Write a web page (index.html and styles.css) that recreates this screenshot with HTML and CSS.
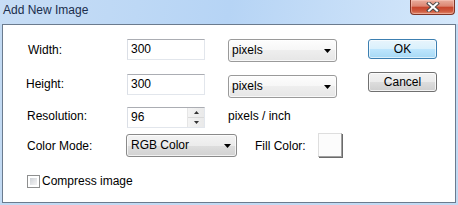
FILE: index.html
```html
<!DOCTYPE html>
<html>
<head>
<meta charset="utf-8">
<link rel="stylesheet" href="styles.css">
</head>
<body>
<div class="window">
  <div class="titlebar">
    <div class="title">Add New Image</div>
    <div class="close">
      <svg width="14" height="10" viewBox="0 0 14 10">
        <path d="M3 1.5 L11 8.5 M11 1.5 L3 8.5" stroke="#4b4b4b" stroke-width="4" stroke-linecap="square"/>
        <path d="M3 1.5 L11 8.5 M11 1.5 L3 8.5" stroke="#ffffff" stroke-width="2" stroke-linecap="square"/>
      </svg>
    </div>
  </div>
  <div class="client">
    <div class="form">
      <div class="row row1">
        <span class="label lbl-width">Width:</span>
        <div class="field"><span class="val">300</span></div>
        <div class="combo light gap">
          <span class="ctext">pixels</span>
          <svg class="arrow" width="7" height="4" viewBox="0 0 7 4"><path d="M0 0 H7 L3.5 4 Z" fill="#000"/></svg>
        </div>
      </div>
      <div class="row row2">
        <span class="label lbl-height">Height:</span>
        <div class="field"><span class="val">300</span></div>
        <div class="combo light gap down1">
          <span class="ctext">pixels</span>
          <svg class="arrow" width="7" height="4" viewBox="0 0 7 4"><path d="M0 0 H7 L3.5 4 Z" fill="#000"/></svg>
        </div>
      </div>
      <div class="row row3">
        <span class="label lbl-res">Resolution:</span>
        <div class="field spinfield">
          <span class="val">96</span>
          <div class="spin">
            <div class="spinbtn"><svg width="5" height="3" viewBox="0 0 5 3"><path d="M0 3 H5 L2.5 0 Z" fill="#333"/></svg></div>
            <div class="spinbtn"><svg width="5" height="3" viewBox="0 0 5 3"><path d="M0 0 H5 L2.5 3 Z" fill="#333"/></svg></div>
          </div>
        </div>
        <span class="unit">pixels / inch</span>
      </div>
      <div class="row row4">
        <span class="label lbl-mode">Color Mode:</span>
        <div class="combo mode">
          <span class="ctext">RGB Color</span>
          <svg class="arrow" width="7" height="4" viewBox="0 0 7 4"><path d="M0 0 H7 L3.5 4 Z" fill="#000"/></svg>
        </div>
        <span class="filllabel">Fill Color:</span>
        <div class="swatch"></div>
      </div>
      <div class="row row5">
        <span class="checkbox"><span class="checkinner"></span></span>
        <span class="checktext">Compress image</span>
      </div>
    </div>
    <div class="buttons">
      <div class="btn ok">OK</div>
      <div class="btn cancel">Cancel</div>
    </div>
  </div>
</div>
</body>
</html>
```

FILE: styles.css
```css
html, body {
  margin: 0;
  padding: 0;
}
body {
  font-family: "Liberation Sans", Arial, sans-serif;
  font-size: 12px;
  color: #000;
}
.window {
  width: 458px;
  height: 205px;
  background: #c2daf3;
  display: flex;
  flex-direction: column;
  overflow: hidden;
}
.titlebar {
  height: 24px;
  flex: none;
  display: flex;
  justify-content: space-between;
  align-items: flex-start;
  background: linear-gradient(100deg, #c7ddf5 0%, #bdd8f5 30%, #b6d4f5 50%, #c3dcf7 70%, #d5e8fb 100%);
}
.title {
  padding-left: 3px;
  line-height: 20px;
  color: #1a2d4c;
}
.close {
  width: 45px;
  height: 15px;
  margin-right: 3px;
  box-sizing: border-box;
  border: 1px solid #7f3426;
  border-top: none;
  border-radius: 0 0 4px 4px;
  background: linear-gradient(#e9ad9d 0%, #dc8571 45%, #c6442b 50%, #cf5a3f 80%, #e08a6e 100%);
  box-shadow: inset 0 0 0 1px rgba(255, 210, 200, 0.45);
  display: flex;
  align-items: center;
  justify-content: center;
}
.close svg {
  display: block;
}
.client {
  margin: 0 2px 2px 2px;
  height: 179px;
  box-sizing: border-box;
  border: 1px solid #6b7b8e;
  background: #fff;
  display: flex;
  padding: 14px 0 0 24px;
}
.form {
  width: 341px;
  flex: none;
  display: flex;
  flex-direction: column;
}
.row {
  display: flex;
  align-items: flex-start;
  flex: none;
}
.row1 { height: 23px; }
.row2 { height: 23px; margin-top: 12px; }
.row3 { height: 21px; margin-top: 10px; }
.row4 { height: 23px; margin-top: 6px; }
.row5 { height: 13px; margin-top: 18px; }
.label {
  width: 100px;
  flex: none;
  white-space: nowrap;
}
.lbl-width { line-height: 23px; padding-left: 1px; width: 99px; }
.lbl-height { line-height: 21px; padding-left: 0; margin-left: -1px; width: 101px; }
.lbl-res { line-height: 19px; }
.lbl-mode { line-height: 25px; width: 99px; }
.field {
  width: 78px;
  height: 21px;
  box-sizing: border-box;
  border: 1px solid #e2e6ec;
  border-top-color: #abadb3;
  border-left-color: #dbdfe6;
  background: #fff;
  display: flex;
  flex: none;
}
.val {
  padding-left: 3px;
  line-height: 19px;
}
.spinfield {
  justify-content: space-between;
}
.spin {
  width: 17px;
  height: 19px;
  display: flex;
  flex-direction: column;
  border-left: 1px solid #e6e6e6;
  box-sizing: border-box;
  background: linear-gradient(90deg, #f4f4f4, #e9e9e9);
}
.spinbtn {
  flex: 1;
  display: flex;
  align-items: center;
  justify-content: center;
}
.spinbtn:first-child {
  border-bottom: 1px solid #dadada;
}
.spinbtn svg { display: block; }
.combo {
  height: 23px;
  box-sizing: border-box;
  border: 1px solid #8a8a8a;
  border-radius: 3px;
  display: flex;
  align-items: center;
  justify-content: space-between;
  flex: none;
  padding: 0 5px 0 3px;
  background: linear-gradient(#f3f3f3 0%, #ececec 50%, #dedede 50%, #d2d2d2 100%);
  box-shadow: inset 0 0 0 1px rgba(255, 255, 255, 0.7);
}
.combo.light {
  width: 109px;
  background: linear-gradient(#fdfdfd 0%, #f6f6f6 50%, #eeeeee 50%, #e6e6e6 100%);
  border-color: #9a9a9a;
}
.combo.gap { margin-left: 23px; }
.combo.down1 { margin-top: 1px; }
.combo.mode {
  width: 111px;
  padding-left: 4px;
}
.ctext {
  line-height: 21px;
}
.arrow {
  display: block;
}
.unit {
  margin-left: 23px;
  line-height: 19px;
  white-space: nowrap;
}
.filllabel {
  margin-left: 18px;
  width: 63px;
  flex: none;
  line-height: 25px;
  white-space: nowrap;
}
.swatch {
  width: 24px;
  height: 24px;
  margin-top: -1px;
  box-sizing: border-box;
  flex: none;
  border: 1px solid #dedede;
  border-right-color: #a0a0a0;
  border-bottom-color: #a0a0a0;
  background: #fcfcfc;
  box-shadow: 1px 1px 0 #6a6a6a;
}
.checkbox {
  width: 13px;
  height: 13px;
  box-sizing: border-box;
  border: 1px solid #8e8f8f;
  background: #fff;
  padding: 2px;
  flex: none;
}
.checkinner {
  display: block;
  width: 7px;
  height: 7px;
  background: linear-gradient(135deg, #cdd1d6 0%, #e6e7e9 60%, #f3f3f4 100%);
}
.checktext {
  margin-left: 2px;
  line-height: 13px;
  white-space: nowrap;
}
.buttons {
  display: flex;
  flex-direction: column;
  flex: none;
}
.btn {
  width: 69px;
  height: 20px;
  box-sizing: border-box;
  border: 1px solid #707070;
  border-radius: 3px;
  text-align: center;
  line-height: 18px;
  background: linear-gradient(#f2f2f2 0%, #ebebeb 50%, #dddddd 50%, #cfcfcf 100%);
  box-shadow: inset 0 0 0 1px rgba(255, 255, 255, 0.75);
}
.btn.ok {
  border-color: #3c7fb1;
  background: linear-gradient(#e8f5fc 0%, #d9f0fc 50%, #bee6fd 50%, #a7d9f5 100%);
  box-shadow: inset 0 0 0 1px rgba(255, 255, 255, 0.6);
}
.btn.cancel {
  margin-top: 13px;
}
```
